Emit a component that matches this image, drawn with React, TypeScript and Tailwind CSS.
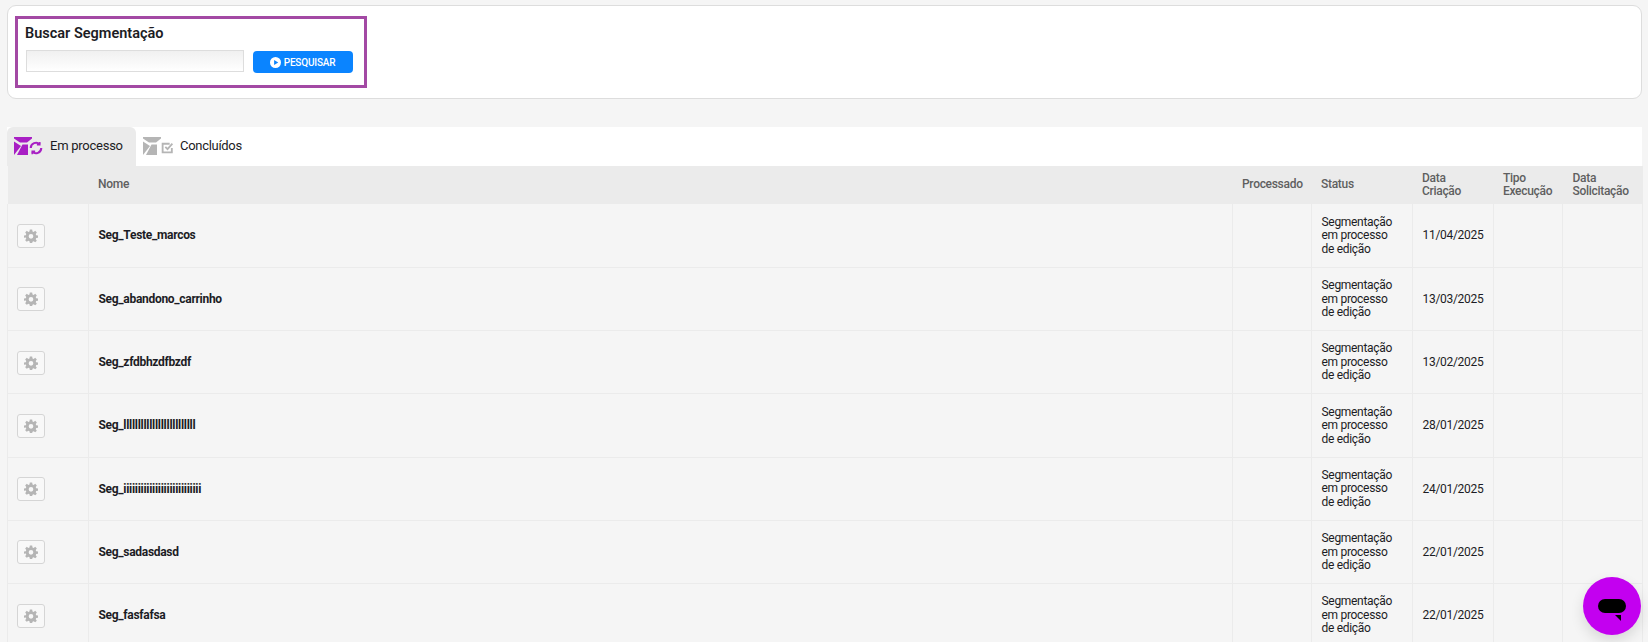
import React from 'react';

const rows = [
    { name: 'Seg_Teste_marcos', date: '11/04/2025' },
    { name: 'Seg_abandono_carrinho', date: '13/03/2025' },
    { name: 'Seg_zfdbhzdfbzdf', date: '13/02/2025' },
    { name: 'Seg_lllllllllllllllllllllllll', date: '28/01/2025' },
    { name: 'Seg_iiiiiiiiiiiiiiiiiiiiiiiiiii', date: '24/01/2025' },
    { name: 'Seg_sadasdasd', date: '22/01/2025' },
    { name: 'Seg_fasfafsa', date: '22/01/2025' },
];

function Envelope({ color }: { color: string }) {
    return (
        <svg width="18" height="18" viewBox="0 0 18 18" className="shrink-0">
            <path d="M0 0H18V1.5L13 5.5H6L0 1.5Z" fill={color} />
            <path d="M0 4.5L7 9L0 18Z" fill={color} />
            <path d="M8.5 7.5H14V18H3Z" fill={color} />
        </svg>
    );
}

function GearIcon() {
    return (
        <svg width="14" height="14" viewBox="0 0 24 24" fill="#b5b5b5">
            <path
                fillRule="evenodd"
                d="M10 1h4l.6 3.2 1.9.8 2.7-1.9 2.8 2.8-1.9 2.7.8 1.9L24 11v4l-3.1.5-.8 1.9 1.9 2.7-2.8 2.8-2.7-1.9-1.9.8L14 24h-4l-.6-3.2-1.9-.8-2.7 1.9-2.8-2.8 1.9-2.7-.8-1.9L0 15v-4l3.1-.5.8-1.9L2 5.9l2.8-2.8 2.7 1.9 1.9-.8L10 1Zm2 7.5a4 4 0 1 0 0 8 4 4 0 0 0 0-8Z"
            />
        </svg>
    );
}

export default function App() {
    return (
        <div className="h-[642px] overflow-hidden bg-[#f5f5f5] pl-[7px] pr-[6px] pt-[5px] font-['Roboto',sans-serif] relative">
            {/* Busca */}
            <div className="h-[94px] rounded-[9px] border border-[#dddddd] bg-white pl-[7px] pt-[10px]">
                <div className="h-[72px] w-[352px] border-[3px] border-[#a349a4] pl-[8px] pt-[5px]">
                    <h2 className="-ml-[1px] text-[14.5px] leading-[20px] font-semibold text-[#1c1c24]">Buscar Segmentação</h2>
                    <div className="mt-[6px] flex items-start gap-[9px]">
                        <input className="h-[22px] w-[218px] border border-[#dddddd] bg-gradient-to-b from-[#f0f0f0] to-white" />
                        <button className="mt-[1px] flex h-[22px] w-[100px] items-center justify-center gap-[3px] rounded-[4px] bg-[#0a84ff] pr-[1px] text-[10px] font-medium tracking-[-0.2px] text-white">
                            <svg width="11" height="11" viewBox="0 0 12 12">
                                <circle cx="6" cy="6" r="6" fill="white" />
                                <path d="M4.5 3.2L9 6L4.5 8.8Z" fill="#0a84ff" />
                            </svg>
                            PESQUISAR
                        </button>
                    </div>
                </div>
            </div>

            {/* Abas */}
            <div className="mt-[28px] flex h-[39px] bg-white">
                <div className="flex w-[129px] items-center gap-[7px] rounded-t-[6px] bg-[#ebebeb] pl-[7px] pb-[2px]">
                    <div className="flex items-center">
                        <Envelope color="#a81fc4" />
                        <svg width="14" height="14" viewBox="0 0 24 24" fill="none" stroke="#a81fc4" strokeWidth="3.6" className="-ml-[3px] mt-[4px]">
                            <path d="M21 12a9 9 0 0 1-15.5 6.2" />
                            <path d="M3 12a9 9 0 0 1 15.5-6.2" />
                            <path d="M18.5 1.5v5h-5" strokeWidth="2.6" />
                            <path d="M5.5 22.5v-5h5" strokeWidth="2.6" />
                        </svg>
                    </div>
                    <span className="text-[13px] tracking-[-0.25px] text-[#1c1c24]">Em processo</span>
                </div>
                <div className="flex items-center gap-[6px] pl-[7px] pb-[2px]">
                    <div className="flex items-center">
                        <Envelope color="#b5b5b5" />
                        <svg width="13" height="13" viewBox="0 0 24 24" fill="none" stroke="#b5b5b5" strokeWidth="3.4" className="mt-[4px]">
                            <path d="M20 13v8H3V5h13" />
                            <path d="M8 11l4 4 9-10" />
                        </svg>
                    </div>
                    <span className="text-[13px] tracking-[-0.3px] text-[#1c1c24]">Concluídos</span>
                </div>
            </div>

            {/* Tabela */}
            <table className="w-[1635px] table-fixed border-collapse text-[12px] tracking-[-0.3px] text-[#1c1c24]">
                <colgroup>
                    <col className="w-[81px]" />
                    <col className="w-[1143.5px]" />
                    <col className="w-[79px]" />
                    <col className="w-[101px]" />
                    <col className="w-[81px]" />
                    <col className="w-[69.5px]" />
                    <col className="w-[80px]" />
                </colgroup>
                <thead>
                    <tr className="h-[38px] bg-[#ebebeb] text-left text-[12px] leading-[13.5px] font-medium text-[#5f5f5f]">
                        <th className="font-medium" />
                        <th className="pl-[9.5px] font-medium">Nome</th>
                        <th className="pl-[10px] font-medium">Processado</th>
                        <th className="pl-[10px] font-medium">Status</th>
                        <th className="pl-[10px] font-medium">Data<br />Criação</th>
                        <th className="pl-[10px] font-medium">Tipo<br />Execução</th>
                        <th className="pl-[10px] font-medium">Data<br />Solicitação</th>
                    </tr>
                </thead>
                <tbody>
                    {rows.map((row) => (
                        <tr key={row.name} className="h-[63.25px] border-b border-[#ebebeb]">
                            <td className="border-r border-l border-[#ebebeb] pl-[9px]">
                                <button className="mt-[1px] flex h-[24px] w-[28px] items-center justify-center rounded-[3px] border border-[#d5d5d5] bg-[#f8f8f8]">
                                    <GearIcon />
                                </button>
                            </td>
                            <td className="border-r border-[#ebebeb] pl-[9.5px] font-bold">{row.name}</td>
                            <td className="border-r border-[#ebebeb]" />
                            <td className="border-r border-[#ebebeb] pl-[10px] pt-[1px] leading-[13.5px]">
                                Segmentação<br />em processo<br />de edição
                            </td>
                            <td className="border-r border-[#ebebeb] pl-[10px]">{row.date}</td>
                            <td className="border-r border-[#ebebeb]" />
                            <td className="border-r border-[#ebebeb]" />
                        </tr>
                    ))}
                </tbody>
            </table>

            {/* Chat */}
            <div className="absolute left-[1583px] top-[577px] flex h-[58px] w-[58px] items-center justify-center rounded-full bg-[#c300f0] shadow-[0_6px_14px_rgba(0,0,0,0.12)]">
                <div className="relative h-[14px] w-[28px] rounded-full bg-black">
                    <div className="absolute right-[5px] top-[16px] h-0 w-0 border-l-[6px] border-t-[6px] border-l-transparent border-t-black" />
                </div>
            </div>
        </div>
    );
}
